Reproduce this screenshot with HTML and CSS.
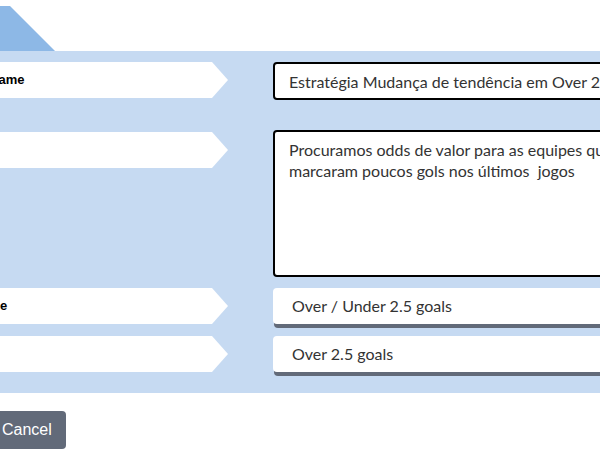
FILE: index.html
```html
<!DOCTYPE html>
<html lang="en">

<head>
    <meta charset="UTF-8">
    <meta name="viewport" content="width=device-width, initial-scale=1.0">
    <title>Edit strategy</title>
    <link rel="stylesheet" href="styles.css">
</head>

<body>
    <div class="tab"></div>
    <form class="strategy-form">
        <div class="row row-name">
            <label class="field-label" for="nameInput">Strategy name</label>
            <input type="text" class="field-input" id="nameInput"
                value="Estratégia Mudança de tendência em Over 2.5 goals">
        </div>
        <div class="row row-summary">
            <label class="field-label" for="summaryInput">Summary</label>
            <textarea class="field-input field-area" id="summaryInput">Procuramos odds de valor para as equipes que marcaram poucos gols nos últimos  jogos</textarea>
        </div>
        <div class="row row-market">
            <label class="field-label" for="marketSelect">Market type</label>
            <div class="field-select" id="marketSelect">Over / Under 2.5 goals</div>
        </div>
        <div class="row row-selection">
            <label class="field-label" for="selectionSelect">Selection</label>
            <div class="field-select" id="selectionSelect">Over 2.5 goals</div>
        </div>
    </form>
    <div class="actions">
        <button type="button" class="btn-cancel">Cancel</button>
    </div>
</body>

</html>
```

FILE: styles.css
```css
* {
    margin: 0;
    padding: 0;
    box-sizing: border-box;
}

html,
body {
    overflow: hidden;
}

body {
    font-family: 'Lato', sans-serif;
    background-color: #fff;
    width: 600px;
    height: 456px;
}

.tab {
    width: 55px;
    height: 45px;
    margin-top: 6px;
    background-color: #8db8e6;
    clip-path: polygon(0 0, 10px 0, 100% 100%, 0 100%);
}

.strategy-form {
    background-color: #c6daf2;
    padding: 11px 0 21px 0;
    margin-left: -80px;
    width: 760px;
}

.row {
    display: flex;
    align-items: flex-start;
    gap: 45px;
}

.row-name {
    margin-bottom: 30px;
}

.row-summary {
    margin-bottom: 11px;
}

.row-market {
    margin-bottom: 12px;
}

.row-summary .field-label {
    margin-top: 2px;
}

.field-label {
    flex: 0 0 308px;
    height: 36px;
    line-height: 36px;
    padding-left: 15px;
    background-color: #fff;
    font-family: 'Liberation Sans', Arial, sans-serif;
    font-size: 13px;
    font-weight: 700;
    color: #000;
    clip-path: polygon(0 0, calc(100% - 16px) 0, 100% 50%, calc(100% - 16px) 100%, 0 100%);
}

.field-input {
    flex: 0 0 400px;
    height: 38px;
    padding: 0 14px;
    border: 2px solid #000;
    border-radius: 4px;
    background-color: #fff;
    font-family: 'Lato', sans-serif;
    font-size: 16px;
    color: #333;
    outline: none;
}

.field-area {
    height: 147px;
    padding: 7px 14px;
    line-height: 21px;
    resize: none;
    overflow: hidden;
}

.field-select {
    flex: 0 0 400px;
    height: 36px;
    line-height: 36px;
    padding-left: 19px;
    background-color: #fff;
    border-radius: 4px;
    box-shadow: 1px 4px 0 #626a79;
    font-size: 16px;
    color: #333;
}

.actions {
    margin-top: 18px;
    margin-left: -12px;
}

.btn-cancel {
    height: 38px;
    padding: 0 14px;
    border: none;
    border-radius: 4px;
    background-color: #626a79;
    color: #fff;
    font-family: 'Liberation Sans', Arial, sans-serif;
    font-size: 16px;
    cursor: pointer;
}
```
